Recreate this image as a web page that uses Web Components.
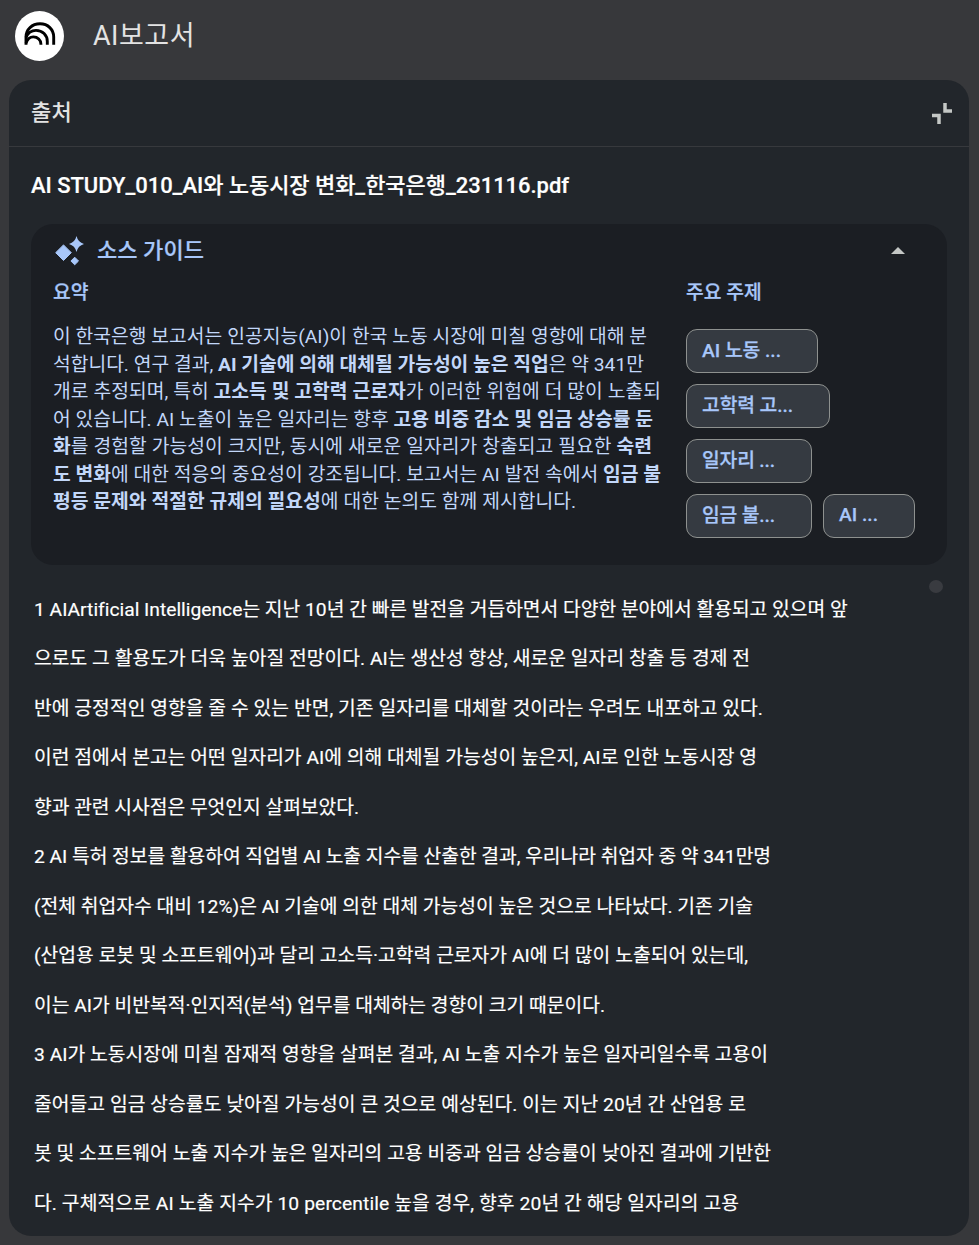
<!DOCTYPE html>
<html lang="ko">
<head>
<meta charset="utf-8">
<title>AI보고서</title>
<style>
  body {
    margin: 0;
    background: #37383b;
    font-family: Roboto, "Noto Sans CJK KR", sans-serif;
  }
</style>
</head>
<body>
<report-app></report-app>

<template id="report-app">
  <style>
    :host {
      display: flex;
      flex-direction: column;
      box-sizing: border-box;
      height: 1245px;
      padding: 0 10px 9px 9px;
      overflow: hidden;
    }
    source-panel { flex: 1; }
  </style>
  <app-header><text-line width="102">AI보고서</text-line></app-header>
  <source-panel>
    <text-line slot="title" width="41">출처</text-line>
    <text-line slot="file" width="538">AI STUDY_010_AI와 노동시장 변화_한국은행_231116.pdf</text-line>
    <source-guide>
      <text-line slot="title" width="107">소스 가이드</text-line>
      <text-line slot="summary" width="594">이 한국은행 보고서는 인공지능(AI)이 한국 노동 시장에 미칠 영향에 대해 분</text-line>
      <text-line slot="summary" width="591">석합니다. 연구 결과, <b>AI 기술에 의해 대체될 가능성이 높은 직업</b>은 약 341만</text-line>
      <text-line slot="summary" width="608">개로 추정되며, 특히 <b>고소득 및 고학력 근로자</b>가 이러한 위험에 더 많이 노출되</text-line>
      <text-line slot="summary" width="600">어 있습니다. AI 노출이 높은 일자리는 향후 <b>고용 비중 감소 및 임금 상승률 둔</b></text-line>
      <text-line slot="summary" width="599"><b>화</b>를 경험할 가능성이 크지만, 동시에 새로운 일자리가 창출되고 필요한 <b>숙련</b></text-line>
      <text-line slot="summary" width="608"><b>도 변화</b>에 대한 적응의 중요성이 강조됩니다. 보고서는 AI 발전 속에서 <b>임금 불</b></text-line>
      <text-line slot="summary" width="523"><b>평등 문제와 적절한 규제의 필요성</b>에 대한 논의도 함께 제시합니다.</text-line>
      <topic-chip slot="topics" style="width:132px"><text-line width="79">AI 노동 ...</text-line></topic-chip>
      <topic-chip slot="topics" style="width:144px"><text-line width="91">고학력 고...</text-line></topic-chip>
      <topic-chip slot="topics" style="width:126px"><text-line width="73">일자리 ...</text-line></topic-chip>
      <topic-chip slot="topics" style="width:126px"><text-line width="73">임금 불...</text-line></topic-chip>
      <topic-chip slot="topics" style="width:92px"><text-line width="39">AI ...</text-line></topic-chip>
    </source-guide>
    <source-text>
      <text-line width="813">1 AIArtificial Intelligence는 지난 10년 간 빠른 발전을 거듭하면서 다양한 분야에서 활용되고 있으며 앞</text-line>
      <text-line width="716">으로도 그 활용도가 더욱 높아질 전망이다. AI는 생산성 향상, 새로운 일자리 창출 등 경제 전</text-line>
      <text-line width="729">반에 긍정적인 영향을 줄 수 있는 반면, 기존 일자리를 대체할 것이라는 우려도 내포하고 있다.</text-line>
      <text-line width="723">이런 점에서 본고는 어떤 일자리가 AI에 의해 대체될 가능성이 높은지, AI로 인한 노동시장 영</text-line>
      <text-line width="325">향과 관련 시사점은 무엇인지 살펴보았다.</text-line>
      <text-line width="737">2 AI 특허 정보를 활용하여 직업별 AI 노출 지수를 산출한 결과, 우리나라 취업자 중 약 341만명</text-line>
      <text-line width="719">(전체 취업자수 대비 12%)은 AI 기술에 의한 대체 가능성이 높은 것으로 나타났다. 기존 기술</text-line>
      <text-line width="714">(산업용 로봇 및 소프트웨어)과 달리 고소득·고학력 근로자가 AI에 더 많이 노출되어 있는데,</text-line>
      <text-line width="571">이는 AI가 비반복적·인지적(분석) 업무를 대체하는 경향이 크기 때문이다.</text-line>
      <text-line width="734">3 AI가 노동시장에 미칠 잠재적 영향을 살펴본 결과, AI 노출 지수가 높은 일자리일수록 고용이</text-line>
      <text-line width="712">줄어들고 임금 상승률도 낮아질 가능성이 큰 것으로 예상된다. 이는 지난 20년 간 산업용 로</text-line>
      <text-line width="737">봇 및 소프트웨어 노출 지수가 높은 일자리의 고용 비중과 임금 상승률이 낮아진 결과에 기반한</text-line>
      <text-line width="705">다. 구체적으로 AI 노출 지수가 10 percentile 높을 경우, 향후 20년 간 해당 일자리의 고용</text-line>
    </source-text>
  </source-panel>
</template>

<template id="text-line">
  <style>
    :host { display: block; white-space: nowrap; }
    span { display: inline-block; }
  </style>
  <span><slot></slot></span>
</template>

<template id="app-header">
  <style>
    :host {
      display: flex;
      align-items: center;
      gap: 29px;
      height: 72px;
      padding: 0 0 8px 6px;
      color: #e3e3e3;
      font-size: 27px;
      line-height: 36px;
    }
    svg { display: block; }
    .name { margin-top: -1px; }
  </style>
  <svg width="49" height="50" viewBox="0 0 49 50">
    <ellipse cx="24.5" cy="25" rx="24.5" ry="25" fill="#fff"/>
    <g fill="none" stroke="#000" stroke-width="2.9">
      <path d="M11 33.7V26C11 18.5 17 12.8 25 12.8S38.7 18.5 38.7 26V33.7"/>
      <path d="M11 26.5C13 21.7 16.5 19.4 21 19.4C27.5 19.4 32.3 24.2 32.3 30.5V33.7"/>
      <path d="M11 32C12.5 28 15 25.9 18.3 25.9C22.7 25.9 25.9 29 25.9 33V33.7"/>
    </g>
  </svg>
  <div class="name"><slot></slot></div>
</template>

<template id="source-panel">
  <style>
    :host {
      display: block;
      background: #22262b;
      border-radius: 22px;
      overflow: hidden;
    }
    header {
      display: flex;
      align-items: center;
      justify-content: space-between;
      box-sizing: border-box;
      height: 67px;
      padding: 0 17px 7px 22px;
      border-bottom: 1px solid #37393d;
      color: #e3e3e3;
      font-size: 22px;
      font-weight: 500;
    }
    svg { display: block; margin-top: 7px; }
    .file {
      padding: 21px 22px 20px;
      color: #fff;
      font-size: 22px;
      font-weight: 500;
      line-height: 36px;
      -webkit-text-stroke: .2px;
    }
  </style>
  <header>
    <slot name="title"></slot>
    <svg width="20" height="21" viewBox="0 0 20 21">
      <path d="M13 0V8H20M0 12.5H7V21" fill="none" stroke="#c4c7c5" stroke-width="3.5"/>
    </svg>
  </header>
  <div class="file"><slot name="file"></slot></div>
  <slot></slot>
</template>

<template id="source-guide">
  <style>
    :host {
      display: block;
      box-sizing: border-box;
      height: 341px;
      margin: 0 22px;
      padding: 10px 22px 0;
      border-radius: 22px;
      background: #1b1e23;
      color: #a8c7fa;
      font-size: 19.25px;
    }
    header { display: flex; align-items: center; height: 34px; font-size: 22px; font-weight: 500; }
    .title { margin-top: -6px; -webkit-text-stroke: .2px; }
    .spark { margin: 0 13px 0 2px; }
    .arrow { margin: -2px 20px 0 auto; }
    .columns { display: flex; }
    .left { flex: none; width: 633px; }
    h3 { margin: 11px 0 16px; font-size: 19.25px; font-weight: 500; line-height: 28px; -webkit-text-stroke: .25px; }
    .summary { color: #c2d7f9; line-height: 27.5px; }
    .topics { display: flex; flex-wrap: wrap; gap: 11px; padding-top: 6px; width: 239px; }
  </style>
  <header>
    <svg class="spark" width="29" height="30" viewBox="0 0 29 30">
      <g fill="#a8c7fa">
        <path d="M8.5 8.9L16.3 16.7L8.5 24.5L.7 16.7Z" stroke="#a8c7fa" stroke-linejoin="round"/>
        <path d="M19.7 21.2L23.5 25L19.7 28.8L15.9 25Z" stroke="#a8c7fa" stroke-linejoin="round"/>
        <path d="M21.5 0Q23 6.3 29 8Q23 9.7 21.5 16Q20 9.7 14 8Q20 6.3 21.5 0Z"/>
      </g>
    </svg>
    <div class="title"><slot name="title"></slot></div>
    <svg class="arrow" width="14" height="7" viewBox="0 0 14 7"><path d="M0 7L7 0L14 7Z" fill="#c4c7c5"/></svg>
  </header>
  <div class="columns">
    <div class="left">
      <h3>요약</h3>
      <div class="summary"><slot name="summary"></slot></div>
    </div>
    <div>
      <h3>주요 주제</h3>
      <div class="topics"><slot name="topics"></slot></div>
    </div>
  </div>
</template>

<template id="topic-chip">
  <style>
    :host {
      display: flex;
      align-items: center;
      box-sizing: border-box;
      height: 44px;
      padding: 0 0 4px 15px;
      border: 1px solid #8e918f;
      border-radius: 11px;
      background: #353a41;
      font-weight: 500;
      -webkit-text-stroke: .25px;
    }
  </style>
  <slot></slot>
</template>

<template id="source-text">
  <style>
    :host {
      display: flex;
      justify-content: space-between;
      padding: 15px 26px 0 25px;
      color: #fff;
      font-size: 19.25px;
      line-height: 49.5px;
      -webkit-text-stroke: .18px;
    }
    .text { margin-top: 4.5px; }
    .thumb { width: 14px; height: 13px; border-radius: 50%; background: #393b40; }
  </style>
  <div class="text"><slot></slot></div>
  <div class="thumb"></div>
</template>

<script>
(function () {
  function define(name) {
    const tmpl = document.getElementById(name);
    customElements.define(name, class extends HTMLElement {
      constructor() {
        super();
        this.attachShadow({ mode: 'open' }).appendChild(tmpl.content.cloneNode(true));
      }
    });
  }

  // one line of text, tracked so that it fills the given width
  customElements.define('text-line', class extends HTMLElement {
    constructor() {
      super();
      const shadowRoot = this.attachShadow({ mode: 'open' });
      shadowRoot.appendChild(document.getElementById('text-line').content.cloneNode(true));
      this.$span = shadowRoot.querySelector('span');
    }

    fit() {
      const width = Number(this.getAttribute('width'));
      const natural = this.$span.getBoundingClientRect().width;
      this.$span.style.letterSpacing = (width - natural) / this.textContent.length + 'px';
    }
  });

  ['app-header', 'topic-chip', 'source-guide', 'source-text', 'source-panel', 'report-app'].forEach(define);

  document.querySelector('report-app').shadowRoot
    .querySelectorAll('text-line')
    .forEach((line) => line.fit());
})()
</script>
</body>
</html>
